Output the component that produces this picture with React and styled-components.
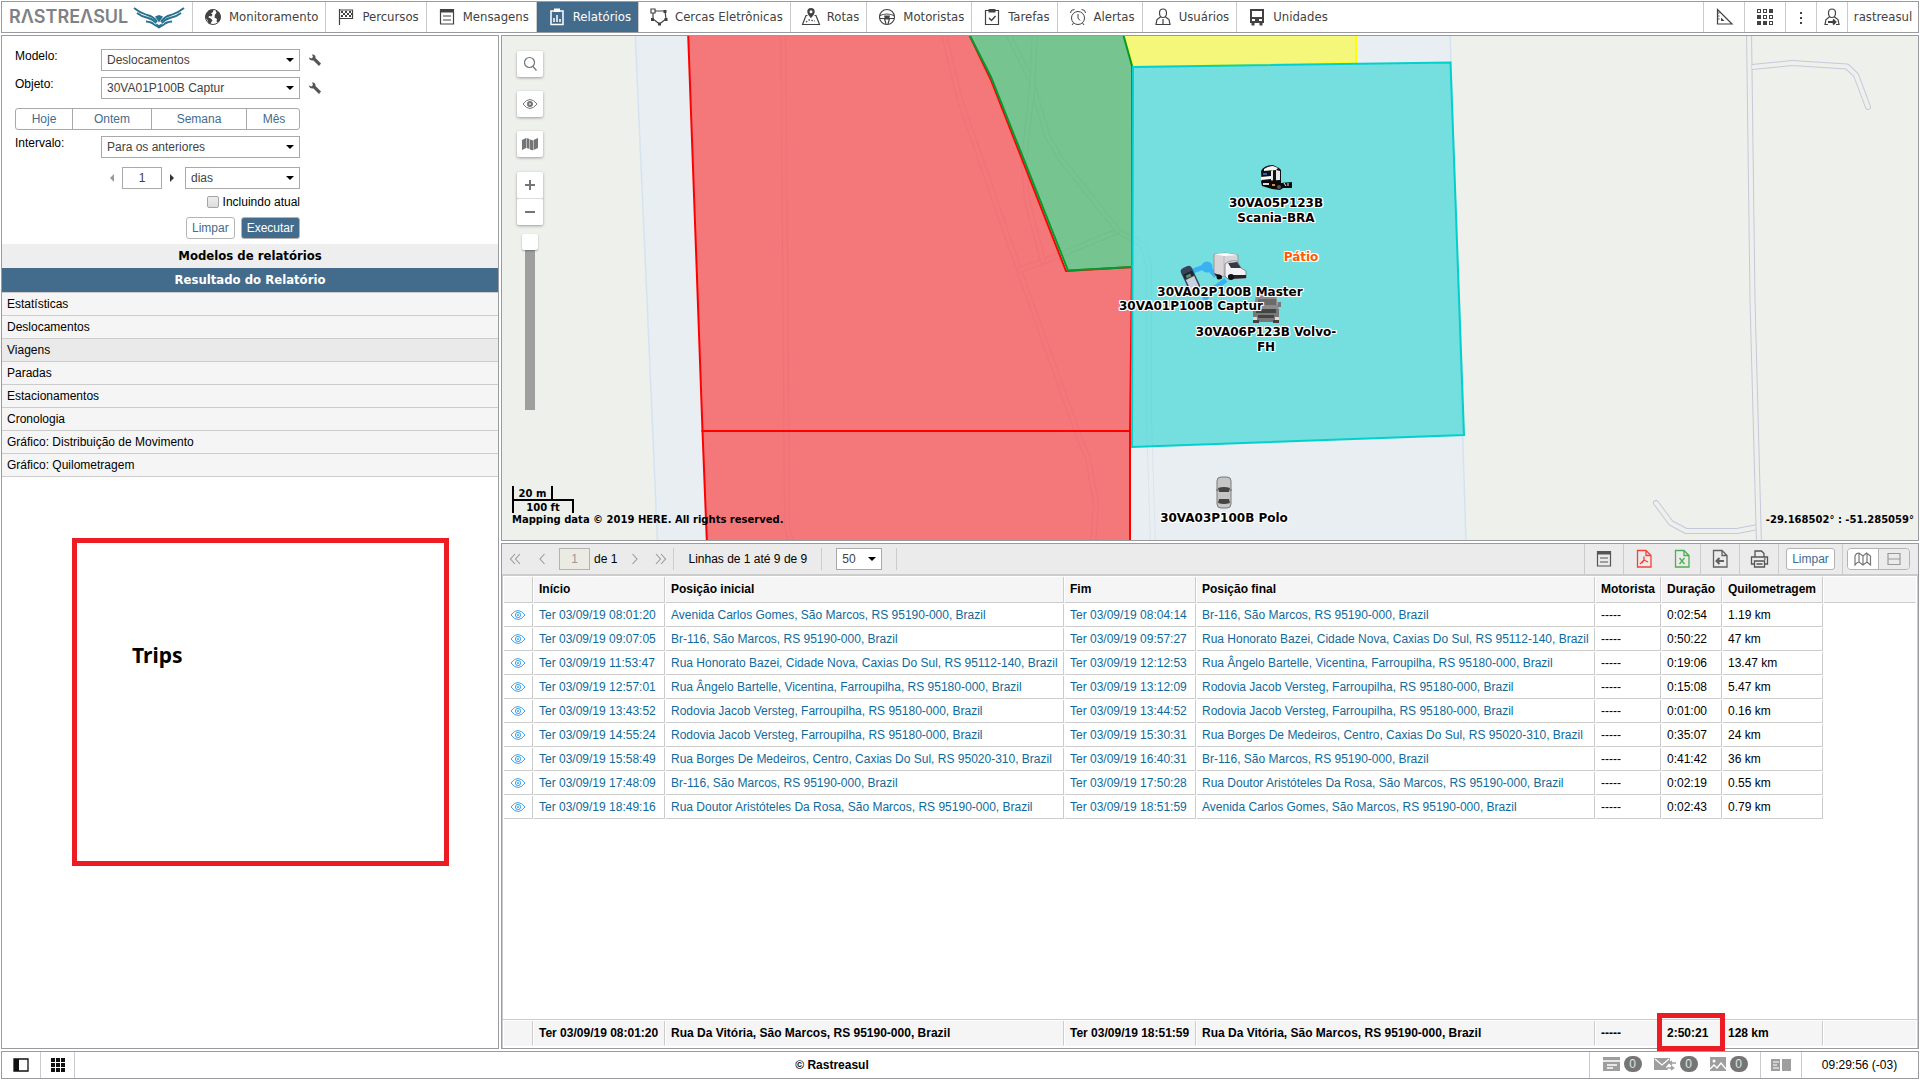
import React from "react";
import styled, { createGlobalStyle, css } from "styled-components";

const SANS = '"Liberation Sans", Arial, sans-serif';
const TAHOMA = '"DejaVu Sans Condensed", "DejaVu Sans", sans-serif';
const VERDANA = '"DejaVu Sans", Verdana, sans-serif';
const BLUE = "#436b8c";
const LINE = "#cccccc";
const FRAME = "#9a9aa0";

const GlobalStyle = createGlobalStyle`
  *, *::before, *::after { box-sizing: border-box; }
  body { margin: 0; background: #fff; color: #000; font: 12px/16px ${SANS}; }
  button, input, select { font: inherit; color: inherit; margin: 0; }
  button { cursor: pointer; }
  a { color: inherit; text-decoration: none; }
  svg { display: block; flex: none; }
`;

/* ---------- frame ---------- */
const Page = styled.div`
  height: 100vh;
  padding: 1px;
  display: grid;
  grid-template-rows: 32px minmax(0, 1fr) 28px;
  gap: 2px;
`;
const Framed = css`
  border: 1px solid ${FRAME};
  background: #fff;
`;
const TopBar = styled.header`
  ${Framed}
  display: flex;
  font: 13px/16px ${TAHOMA};
  color: #424242;
`;
const Workspace = styled.main`
  display: grid;
  grid-template-columns: 498px minmax(0, 1fr);
  gap: 2px;
  min-height: 0;
`;
const RightSide = styled.div`
  display: grid;
  grid-template-rows: minmax(0, 1fr) minmax(0, 1fr);
  gap: 2px;
  min-height: 0;
`;

/* ---------- top bar ---------- */
const Logo = styled.a`
  display: flex;
  align-items: center;
  width: 191px;
  padding-left: 7px;
  border-right: 1px solid ${LINE};
`;
const LogoText = styled.span`
  font: 600 18px/20px Inter, sans-serif;
  color: #808184;
  width: 124px;
  white-space: nowrap;
`;
const Nav = styled.nav`
  display: flex;
  flex: 1;
`;
const NavItem = styled.a`
  display: flex;
  align-items: center;
  gap: 6px;
  padding: 0 7px 0 10px;
  border-right: 1px solid ${(p) => (p.$last ? "transparent" : LINE)};
  ${(p) => p.$active && css`background: ${BLUE}; color: #fff;`}
`;
const BarButton = styled.button`
  display: flex;
  align-items: center;
  justify-content: center;
  width: ${(p) => p.$w}px;
  padding: 0;
  background: none;
  border: 0;
  border-left: 1px solid ${LINE};
`;

/* ---------- left panel ---------- */
const SidePanel = styled.aside`
  ${Framed}
  min-height: 0;
  overflow: hidden;
`;
const Form = styled.form`
  display: flex;
  flex-direction: column;
  gap: 6px;
  padding: 13px 0 5px 13px;
`;
const FormRow = styled.div`
  display: flex;
  height: 22px;
  label { width: 86px; line-height: 14px; }
`;
const SelectWrap = styled.span`
  position: relative;
  display: flex;
  width: ${(p) => p.$w}px;
  height: 22px;
  &::after {
    content: "";
    position: absolute;
    right: 6px;
    top: 9px;
    border: 4px solid transparent;
    border-top-color: #000;
    border-bottom: 0;
    pointer-events: none;
  }
  select {
    appearance: none;
    width: 100%;
    padding: 0 5px;
    border: 1px solid #a9a9a9;
    border-radius: 0;
    background: #fff;
    color: #424242;
  }
`;
const IconButton = styled.button`
  display: flex;
  align-items: center;
  justify-content: center;
  width: ${(p) => p.$w || 20}px;
  padding: 0;
  border: 0;
  background: none;
  color: ${(p) => p.$color || "#555"};
`;
const Segments = styled.div`
  display: grid;
  grid-template-columns: 56px 79px 95px 55px;
  width: 285px;
  height: 22px;
  margin: 3px 0 0;
  border: 1px solid #a9a9a9;
  border-radius: 3px;
  button {
    padding: 0;
    border: 0;
    border-left: 1px solid #a9a9a9;
    background: none;
    color: ${BLUE};
  }
  button:first-child { border-left: 0; }
`;
const Stepper = styled.div`
  display: flex;
  justify-content: flex-end;
  align-items: center;
  width: 285px;
  height: 22px;
  margin-top: 3px;
  > input {
    width: 40px;
    height: 22px;
    padding: 0;
    border: 1px solid #a9a9a9;
    text-align: center;
    color: #424242;
  }
`;
const StepButton = styled(IconButton)`
  width: 23px;
  padding: ${(p) => (p.$off ? "0 0 0 2px" : "0 4px 0 0")};
  color: ${(p) => (p.$off ? "#9a9a9a" : "#333")};
`;
const CheckRow = styled.label`
  display: flex;
  justify-content: flex-end;
  align-items: center;
  gap: 4px;
  width: 285px;
  height: 14px;
  margin-bottom: 2px;
  input {
    appearance: none;
    width: 12px;
    height: 12px;
    border: 1px solid #a5a5a5;
    border-radius: 2px;
    background: linear-gradient(#eee, #dcdcdc);
  }
`;
const FormButtons = styled.div`
  display: flex;
  justify-content: flex-end;
  gap: 6px;
  width: 285px;
`;
const PushButton = styled.button`
  height: 22px;
  padding: 0 5px;
  border: 1px solid #b4b4b4;
  border-radius: 3px;
  background: ${(p) => (p.$primary ? BLUE : "#fff")};
  color: ${(p) => (p.$primary ? "#fff" : BLUE)};
`;
const Heading = styled.h2`
  margin: 0;
  height: 24px;
  text-align: center;
  font: bold 13px/24px ${TAHOMA};
  background: ${(p) => (p.$active ? BLUE : "#eeeeee")};
  color: ${(p) => (p.$active ? "#fff" : "#000")};
`;
const ResultList = styled.ul`
  list-style: none;
  margin: 0;
  padding: 0;
  border-top: 1px solid ${LINE};
`;
const ResultItem = styled.li`
  height: 23px;
  padding-left: 5px;
  line-height: 23px;
  border-bottom: 1px solid ${LINE};
  background: ${(p) => (p.$active ? "#eaeaea" : "#f5f5f5")};
`;
const Note = styled.div`
  margin: 61px 49px 0 70px;
  height: 328px;
  padding: 98px 55px;
  border: 5px solid #ed1c24;
  font: bold 21px/28px "Noto Sans", sans-serif;
`;

/* ---------- map ---------- */
const MapPanel = styled.section`
  ${Framed}
  position: relative;
  overflow: hidden;
  font: bold 12px/15px ${VERDANA};
`;
const MapCanvas = styled.svg`
  width: 100%;
  height: 100%;
`;
const MapLabel = styled.div`
  position: absolute;
  left: ${(p) => p.$x}px;
  top: ${(p) => p.$y}px;
  transform: translateX(-50%);
  text-align: center;
  white-space: pre;
  color: ${(p) => p.$color || "#000"};
  text-shadow: 1px 0 #fff, -1px 0 #fff, 0 1px #fff, 0 -1px #fff, 1px 1px #fff, -1px -1px #fff, 1px -1px #fff, -1px 1px #fff;
`;
const Controls = styled.div`
  position: absolute;
  left: 15px;
  top: 15px;
  display: flex;
  flex-direction: column;
  align-items: center;
  gap: 14px;
`;
const MapButton = styled.button`
  display: flex;
  align-items: center;
  justify-content: center;
  width: 26px;
  height: 26px;
  padding: 0;
  border: 0;
  border-radius: 2px;
  background: #fff;
  color: #757575;
  box-shadow: 0 1px 3px rgba(0, 0, 0, 0.35);
`;
const ZoomPair = styled.div`
  display: grid;
  gap: 1px;
  margin-top: 1px;
  background: #ddd;
  border-radius: 2px;
  box-shadow: 0 1px 3px rgba(0, 0, 0, 0.35);
  ${MapButton} { box-shadow: none; }
`;
const ZoomSlider = styled.input`
  appearance: none;
  writing-mode: vertical-lr;
  width: 16px;
  height: 176px;
  margin: -5px 0 0;
  background: linear-gradient(90deg, transparent 3px, #9e9e9c 3px, #9e9e9c 13px, transparent 13px);
  &::-webkit-slider-thumb {
    appearance: none;
    width: 16px;
    height: 16px;
    border-radius: 2px;
    background: #fff;
    box-shadow: 0 1px 2px rgba(0, 0, 0, 0.3);
  }
`;
const MapInfo = styled.div`
  position: absolute;
  left: 10px;
  bottom: 13px;
  font: bold 10px/14px ${VERDANA};
`;
const ScaleTop = styled.div`
  width: 41px;
  height: 13px;
  border: solid #000;
  border-width: 0 2px;
  text-align: center;
  line-height: 16px;
`;
const ScaleBottom = styled.div`
  width: 62px;
  height: 14px;
  border: 2px solid #000;
  border-bottom: 0;
  text-align: center;
`;
const Coordinates = styled(MapInfo)`
  left: auto;
  right: 4px;
`;

/* ---------- report ---------- */
const Report = styled.section`
  ${Framed}
  display: flex;
  flex-direction: column;
  min-height: 0;
`;
const ToolBar = styled.div`
  display: flex;
  align-items: center;
  height: 32px;
  border-bottom: 2px solid ${LINE};
  background: #ebebeb;
`;
const Cell = styled.div`
  display: flex;
  align-items: center;
  justify-content: center;
  align-self: center;
  height: ${(p) => (p.$tall ? 30 : 22)}px;
  width: ${(p) => p.$w}px;
  border-right: ${(p) => (p.$plain ? "0" : `1px solid ${LINE}`)};
`;
const PageLabel = styled.label`
  display: flex;
  align-items: center;
  gap: 4px;
  margin: 0 4px;
  input {
    width: 31px;
    height: 22px;
    padding: 0;
    border: 1px solid #b4b4b4;
    background: #ebebe4;
    color: #999;
    text-align: center;
  }
`;
const PagerButton = styled(IconButton)`
  width: ${(p) => p.$w}px;
  color: #999;
`;
const Fill = styled.div`
  flex: 1;
  align-self: stretch;
  border-right: 1px solid ${LINE};
`;
const ViewToggle = styled.div`
  display: grid;
  grid-template-columns: 30px 31px;
  height: 22px;
  margin-right: 4px;
  border: 1px solid #b4b4b4;
  border-radius: 4px;
  overflow: hidden;
  button {
    display: flex;
    align-items: center;
    justify-content: center;
    padding: 0;
    border: 0;
    color: #777;
    background: #fff;
  }
  button + button { border-left: 1px solid #b4b4b4; background: #ebebeb; color: #999; }
`;
const TableArea = styled.div`
  flex: 1;
  min-height: 0;
  display: flex;
  flex-direction: column;
  justify-content: space-between;
  border: solid ${LINE};
  border-width: 0 1px;
`;
const Table = styled.table`
  width: 100%;
  table-layout: fixed;
  border-spacing: 1px;
  th, td {
    height: 23px;
    padding: 0 5px;
    border-right: 1px solid ${LINE};
    border-bottom: 1px solid ${LINE};
    text-align: left;
    white-space: nowrap;
  }
  th { height: 25px; background: #f5f5f5; border-bottom-color: #f5f5f5; }
  thead th { height: 26px; padding-bottom: 1px; border-bottom-color: ${LINE}; }
  td:last-child { border-color: transparent; }
  th:last-child { border-right-color: transparent; }
  td svg { margin: 0 auto; }
`;
const Totals = styled.div`
  border-top: 1px solid ${LINE};
  padding-bottom: 1px;
`;
const PlaceLink = styled.a`
  color: #0f6a9b;
`;
const Marked = styled.th`
  position: relative;
  &::after {
    content: "";
    position: absolute;
    left: -5px;
    top: -8px;
    width: 68px;
    height: 38px;
    border: 5px solid #ed1c24;
    z-index: 1;
  }
`;

/* ---------- status bar ---------- */
const StatusBar = styled.footer`
  ${Framed}
  display: flex;
`;
const StatusCell = styled.div`
  display: flex;
  align-items: center;
  justify-content: center;
  gap: 12px;
  width: ${(p) => p.$w}px;
  flex: ${(p) => (p.$w ? "none" : 1)};
  font-weight: ${(p) => (p.$bold ? "bold" : "normal")};
  border-right: 1px solid ${(p) => (p.$last ? "transparent" : LINE)};
`;
const StatusGroup = styled.span`
  display: flex;
  align-items: center;
  gap: 4px;
  margin-bottom: 2px;
`;
const Badge = styled.span`
  width: 18px;
  height: 16px;
  border-radius: 8px;
  background: #757575;
  color: #e4e4e4;
  text-align: center;
  line-height: 16px;
`;

/* ---------- icons ---------- */
const Svg = ({ s = 20, w = s, h = s, children, sw = 1.2 }) => (
  <svg width={w} height={h} viewBox={`0 0 ${w} ${h}`} fill="none" stroke="currentColor" strokeWidth={sw} aria-hidden="true">
    {children}
  </svg>
);
const F = { fill: "currentColor", stroke: "none" };

const Globe = () => (
  <Svg sw={1}><circle cx="10" cy="10" r="7.5" />
    <path {...F} d="M3 7l3-4 4.500-.5-.5 2.500-2 1.500 1.500 1-1 2-2.500-.5-.5 1.500 2.500 1 1.500 2-1.500 2-.5 1.800-2-.8-1-3.500-2-2zM12.500 3.500l3.500 1.500 1.500 4-.5 4-2 2.500-1.500-1 .5-2.500-2.500-1.500.5-3 1.500-1.500z" /></Svg>
);
const Flag = () => (
  <Svg><path d="M3.500 2v16M3.500 3h13v8.500h-13" />
    <path {...F} d="M5 4h2v2H5zM9 4h2v2H9zM13 4h2v2h-2zM7 6h2v2H7zM11 6h2v2h-2zM5 8h2v2H5zM9 8h2v2H9zM13 8h2v2h-2zM15 6h1v2h-1z" /></Svg>
);
const Doc = ({ s = 20 }) => (
  <Svg s={s}><path d="M3.500 2.500h13v14.500h-13z" /><path {...F} d="M3 2h14v3.500H3z" /><path d="M6 9h8M6 13h8" /></Svg>
);
const ReportIcon = () => (
  <Svg sw={1.5}><path d="M4 4h12v13.500H4z" /><path {...F} d="M7 1.500h6V5H7z" /><path d="M7 15v-4M10 15V8M13 15v-3" /></Svg>
);
const Fence = () => (
  <Svg><path d="M4 4h12l1 8-6.500 5L4 12z" /><path fill="#fff" d="M2 2h4v4H2z" /><path {...F} d="M14.500 3h3v3h-3zM15.500 11h3v3h-3zM9 15.500h3v3H9zM2 11h3v3H2z" /></Svg>
);
const Route = () => (
  <Svg><path d="M6.500 8.500H5L1.500 17.500h17L15 8.500h-1.500" /><path {...F} fillRule="evenodd" d="M10 1a3.700 3.700 0 0 1 3.700 3.700C13.700 7.500 10 11 10 11S6.300 7.500 6.300 4.700A3.700 3.700 0 0 1 10 1zm0 2.200a1.500 1.500 0 1 0 0 3 1.500 1.500 0 0 0 0-3z" /><path strokeDasharray="1.500 1.500" d="M5 15l3-2 6 1" /></Svg>
);
const Wheel = () => (
  <Svg><circle cx="10" cy="10" r="7.500" /><path d="M3 8.500q7-3 14 0M3 11.500h4.500l1.500 5.500M17 11.500h-4.500L11 17" /><path {...F} d="M7 8.500h6l-1 4H8z" /></Svg>
);
const Task = () => (
  <Svg><path d="M3.500 3.500h13v14h-13z" /><path {...F} d="M6.500 2h7v3.500h-7z" /><path strokeWidth="1.500" d="M7 11l2.500 2.500L13.500 9" /></Svg>
);
const Alarm = () => (
  <Svg sw={1}><circle cx="10" cy="11" r="6.500" /><path d="M10 7v4l2 2.500M2.500 6q0-3.500 4-3.500M17.500 6q0-3.500-4-3.500M5.500 16L4 18M14.500 16l1.500 2" /></Svg>
);
const User = ({ arrow }) => (
  <Svg><path d="M10 2c-2.500 0-3.500 1.700-3.500 4s1.300 4.500 3.500 4.500 3.500-2.200 3.500-4.500-1-4-3.500-4z" /><path d="M7.500 10L4 12.500 3 17.500h3M12.500 10l3.500 2.500 1 5h-3" />{arrow ? <path strokeWidth="1.800" d="M6 15h7M11 12.500l2.500 2.500-2.500 2.500" /> : <path d="M6 17.500h8M10 12v5" />}</Svg>
);
const Bus = () => (
  <Svg><path {...F} fillRule="evenodd" d="M3 2h14v14h-1.500v2.500h-3V16h-5v2.500h-3V16H3zm2 2v6h10V4zm0 8v2h3v-2zm7 0v2h3v-2z" /></Svg>
);
const Ruler = () => <Svg><path d="M3.500 2.500v14.500h14.500z" /><path {...F} d="M7 10.500v3.500h3.500z" /><path d="M3.500 6h2M3.500 9h2M3.500 12h2" /></Svg>;
/* filled cells of the 3x3 application grid */
const TILE_FILL = [2, 3, 6, 7];
const Tiles = () => (
  <Svg sw={1}>{[0, 1, 2].flatMap((r) => [0, 1, 2].map((c) => (
    <rect key={`${r}${c}`} x={2.5 + c * 6} y={2.5 + r * 6} width="3" height="3" fill={TILE_FILL.includes(r * 3 + c) ? "currentColor" : "none"} />
  )))}</Svg>
);
const Dots = () => <Svg><path {...F} d="M9 5h2v2H9zM9 10h2v2H9zM9 15h2v2H9z" /></Svg>;
const Wrench = () => <Svg s={14}><path {...F} d="M1 4.500l2.500 1L5 4 4 1.500C6 1 8 2.500 7.500 5L13 10.500 11 13 5.500 7.500C3 8 1 6.500 1 4.500z" /></Svg>;
const Triangle = ({ left }) => <Svg s={8}><path {...F} d={left ? "M6 0v8L2 4z" : "M2 0v8l4-4z"} /></Svg>;
const Chevrons = ({ d, w = 10 }) => <Svg w={w} h={12} sw={1.1}><path d={d} /></Svg>;
const Eye = ({ w = 16, dark }) => (
  <Svg w={w} h={12} sw={1}><g stroke={dark ? "#777" : "#42a0e8"}><path d="M1 6q7-9 14 0q-7 9-14 0z" /><circle cx="8" cy="6" r="2.600" fill={dark ? "#777" : "none"} /></g><circle cx="8" cy="6" r="1" fill={dark ? "#ddd" : "#42a0e8"} stroke="none" /></Svg>
);
const FileIcon = ({ color, children }) => <Svg><g stroke={color || "#616161"} strokeWidth="1.300"><path d="M3.500 1.500h8.500l5 5v11.500H3.500zM12 1.500v5h5" />{children}</g></Svg>;
const Printer = () => <Svg sw={1.3}><path d="M6 8V2h6.500L15 4.500V8M5.500 15H2.500V8h16v7h-3M5.500 12h10v6h-10zM7.500 15h6M15 10h1.500" /></Svg>;
const MapFold = ({ solid }) => (
  solid
    ? <Svg w={18} h={14}><path {...F} d="M1 3l4-2v10l-4 2zM5.500 1l3 1v10l-3-1zM9 2.500l3 1v10l-3-1zM12.500 3L17 1v10l-4.500 2z" /></Svg>
    : <Svg w={18} h={14}><path d="M1 13V4q1-3 4-3l4 3 3.500-3 4 3v9l-3.500-3-4 3-4-3q-2 0-4 3zM5 1v9M9 4v9M13 1v9" /></Svg>
);
const Wings = () => (
  <svg width="52" height="26" viewBox="0 0 52 26" aria-hidden="true">
    <g fill="none" stroke="#26728f" strokeWidth="1.800" strokeLinejoin="round">
      <path d="M1 4q6 5 13 7 7 1.500 10 7M51 4q-6 5-13 7-7 1.500-10 7" />
      <path d="M4 9q5 4 11 5 5 1 8 5M48 9q-5 4-11 5-5 1-8 5" />
      <path d="M13 17.500q6 .5 8 3l5 3 5-3q2-2.500 8-3" />
    </g>
    <path fill="#26728f" d="M22 12.500l4-1.500 4 1.500-4 6zM22 19l4 2 4-2-4 5.500z" />
  </svg>
);

const NAV = [
  ["Monitoramento", Globe], ["Percursos", Flag], ["Mensagens", Doc], ["Relatórios", ReportIcon],
  ["Cercas Eletrônicas", Fence], ["Rotas", Route], ["Motoristas", Wheel], ["Tarefas", Task],
  ["Alertas", Alarm], ["Usuários", User], ["Unidades", Bus],
];
const RESULTS = ["Estatísticas", "Deslocamentos", "Viagens", "Paradas", "Estacionamentos", "Cronologia", "Gráfico: Distribuição de Movimento", "Gráfico: Quilometragem"];

const AV = "Avenida Carlos Gomes, São Marcos, RS 95190-000, Brazil";
const BR = "Br-116, São Marcos, RS 95190-000, Brazil";
const HB = "Rua Honorato Bazei, Cidade Nova, Caxias Do Sul, RS 95112-140, Brazil";
const AB = "Rua Ângelo Bartelle, Vicentina, Farroupilha, RS 95180-000, Brazil";
const JV = "Rodovia Jacob Versteg, Farroupilha, RS 95180-000, Brazil";
const BM = "Rua Borges De Medeiros, Centro, Caxias Do Sul, RS 95020-310, Brazil";
const DA = "Rua Doutor Aristóteles Da Rosa, São Marcos, RS 95190-000, Brazil";
const RV = "Rua Da Vitória, São Marcos, RS 95190-000, Brazil";
const TRIPS = [
  ["08:01:20", AV, "08:04:14", BR, "0:02:54", "1.19 km"],
  ["09:07:05", BR, "09:57:27", HB, "0:50:22", "47 km"],
  ["11:53:47", HB, "12:12:53", AB, "0:19:06", "13.47 km"],
  ["12:57:01", AB, "13:12:09", JV, "0:15:08", "5.47 km"],
  ["13:43:52", JV, "13:44:52", JV, "0:01:00", "0.16 km"],
  ["14:55:24", JV, "15:30:31", BM, "0:35:07", "24 km"],
  ["15:58:49", BM, "16:40:31", BR, "0:41:42", "36 km"],
  ["17:48:09", BR, "17:50:28", DA, "0:02:19", "0.55 km"],
  ["18:49:16", DA, "18:51:59", AV, "0:02:43", "0.79 km"],
];
const COLS = [29, 131, 398, 131, 398, 65, 60, 100];
const Columns = () => (
  <colgroup>{COLS.map((w, i) => <col key={i} style={{ width: w }} />)}<col /></colgroup>
);

const Select = ({ w, id, label, children }) => (
  <SelectWrap $w={w}><select id={id} aria-label={label}><option>{children}</option></select></SelectWrap>
);

const Road = ({ pts, land = "#e8eef2", edge = "#dde3ed", w = 6 }) => (
  <g fill="none" strokeLinejoin="round" strokeLinecap="round">
    <polyline points={pts} stroke={edge} strokeWidth={w} />
    <polyline points={pts} stroke={land} strokeWidth={w - 2} />
  </g>
);

function MapDrawing() {
  const side = { land: "#eef0ec", edge: "#c6c7dc" };
  return (
    <MapCanvas viewBox="502 36 1416 504" preserveAspectRatio="xMinYMin slice" aria-hidden="true">
      <rect x="502" y="36" width="1416" height="504" fill="#eef0ec" />
      <path d="M635 30L647 300 657.500 542H1466L1450 30z" fill="#e8eef2" stroke="#d5e3f1" strokeWidth="1.500" />
      <Road pts="783,30 785.500,300 787,527 792,545" />
      <Road pts="943,30 960,100 1019,270 1079,437 1088,458 1096,503 1093,545" />
      <Road pts="1019,270 1045,261 1118,231 1143,245 1149,267 1149,420 1153,545" />
      <Road pts="1006,30 1031,80 1047,135 1060,158 1118,231" />
      <Road pts="1035,30 1032,90 1024,160 1027,200 1043,261" />
      <Road {...side} pts="1752,67 1792,63 1847,66.500 1856,75 1868,107" />
      <Road {...side} pts="1656,503 1671,523 1686,531 1737,531 1758,527" />
      <Road {...side} pts="1749,30 1752.500,300 1759,545" />
      <path d="M1752 67h4" stroke="#eef0ec" strokeWidth="3" />
      <g strokeWidth="2">
        <g fill="rgba(255,0,0,.5)" stroke="#f00">
          <path d="M688 30L696 250 702.500 431H1130L1132 267 1066 271 991 80 967 30z" />
          <path d="M702.500 431L707 545H1130V431z" />
        </g>
        <path d="M1122 30L1133 67 1356 63V30z" fill="rgba(255,255,0,.5)" stroke="#ff0" />
        <path d="M967 30L991 77 1068 270.500 1132 267V66L1122 30z" fill="rgba(4,154,46,.5)" stroke="#049a2e" />
        <path d="M1133 67L1450.500 62.500 1464 435 1132 447z" fill="rgba(2,208,204,.5)" stroke="#02d0cc" />
      </g>
      {/* track between the parked vehicles */}
      <g stroke="#38b2f2" fill="#38b2f2" strokeWidth="5">
        <path fill="none" d="M1190 272L1207 266 1216 276M1226 280L1212 290 1204 300" />
        <circle cx="1207" cy="267" r="3" />
      </g>
      {/* box truck */}
      <g>
        <path d="M1214 254l12-1 12 2v22h-12l-12-3z" fill="#d9d4d8" stroke="#8d8a92" strokeWidth=".8" />
        <path d="M1214 254l12-1 12 2-14 1z" fill="#fff" />
        <path d="M1224 256v20" stroke="#b9b6bf" />
        <path d="M1225 264q4-4 12-3l4 7 5 3v7l-18 1-3-3z" fill="#f2f2f6" stroke="#77757d" strokeWidth=".8" />
        <path d="M1228 263l9-1 4 6-10 0z" fill="#333844" />
        <path d="M1228 275h18v3l-16 1zM1214 273l8 3v3l-6-3z" fill="#23232a" />
        <circle cx="1231" cy="277" r="3" fill="#111" /><circle cx="1219" cy="277" r="2.500" fill="#111" />
      </g>
      {/* car seen at an angle */}
      <g transform="rotate(-25 1190 278)">
        <rect x="1184" y="266" width="12" height="26" rx="4" fill="#39435c" />
        <path d="M1185 272h10v5h-10z" fill="#1c2534" /><path d="M1185.500 278h9v11h-9z" fill="#c9d0de" />
        <path d="M1187 274h5v3h-5z" fill="#5a8f62" />
      </g>
      {/* tractor unit */}
      <g>
        <path d="M1261 171q3-6 12-6l6 3 2 2v16h-19z" fill="#111" />
        <path d="M1264 169q4-3 9-3l5 2-2 2-12 1z" fill="#f4f5f7" />
        <path d="M1271 171l2-1v11l-2 1zM1276 170l4 1v9l-4 2z" fill="#e8e8ea" />
        <path d="M1263 173h4v2h-4z" fill="#3a5cb0" />
        <path d="M1261 177l10-1v3l-10 1zM1262 182h7v2h-7z" fill="#fff" />
        <path d="M1261 181l20-1v3l11-1v6h-9l-3 2-8-1-10-3z" fill="#0b0b0b" />
        <path d="M1263 183h6v2h-6z" fill="#ddd" /><path d="M1272 184h3v2h-3z" fill="#d98c3a" />
        <circle cx="1279" cy="187" r="2" fill="#555" /><path d="M1284 183l2 3M1288 183v3" stroke="#eee" />
      </g>
      {/* truck front */}
      <g>
        <path d="M1256 295h20l3 16H1253z" fill="#8b8b8b" /><path d="M1258 299h18v6h-18z" fill="#6b6b6b" />
        <path d="M1253 309h26v13h-26z" fill="#787878" /><path d="M1256 309h20v4h-20zM1258 315h16v3h-16z" fill="#444" />
        <path d="M1253 317h4v3h-4zM1275 317h4v3h-4z" fill="#ddd" /><path d="M1253 320h6v3h-6zM1273 320h6v3h-6z" fill="#444" />
        <path d="M1278 302h3v5h-3z" fill="#777" />
      </g>
      {/* parked car from above */}
      <g>
        <rect x="1217" y="477" width="14" height="31" rx="4" fill="#c5c5c5" stroke="#7b7b7b" />
        <path d="M1218 488q6-2 12 0l-1 4h-10z" fill="#444" /><path d="M1218 503q6 2 12 0l-1-4h-10z" fill="#444" />
        <path d="M1216 490h2M1230 490h2" stroke="#666" />
      </g>
    </MapCanvas>
  );
}

export default function App() {
  return (
    <>
      <GlobalStyle />
      <Page>
        <TopBar>
          <Logo href="#" aria-label="Rastreasul">
            <LogoText>RΛSTREΛSUL</LogoText>
            <Wings />
          </Logo>
          <Nav>
            {NAV.map(([name, Icon], i) => (
              <NavItem key={name} href="#" $active={name === "Relatórios"} $last={i === NAV.length - 1}>
                <Icon />{name}
              </NavItem>
            ))}
          </Nav>
          <BarButton $w={41} aria-label="Ferramentas"><Ruler /></BarButton>
          <BarButton $w={41} aria-label="Aplicativos"><Tiles /></BarButton>
          <BarButton $w={31} aria-label="Mais"><Dots /></BarButton>
          <BarButton $w={31} aria-label="Trocar usuário"><User arrow /></BarButton>
          <BarButton $w={71}>rastreasul</BarButton>
        </TopBar>

        <Workspace>
          <SidePanel>
            <Form onSubmit={(e) => e.preventDefault()}>
              <FormRow>
                <label htmlFor="modelo">Modelo:</label>
                <Select w={199} id="modelo">Deslocamentos</Select>
                <IconButton type="button" $w={30} aria-label="Editar modelo"><Wrench /></IconButton>
              </FormRow>
              <FormRow>
                <label htmlFor="objeto">Objeto:</label>
                <Select w={199} id="objeto">30VA01P100B Captur</Select>
                <IconButton type="button" $w={30} aria-label="Editar objeto"><Wrench /></IconButton>
              </FormRow>
              <Segments>
                <button type="button">Hoje</button>
                <button type="button">Ontem</button>
                <button type="button">Semana</button>
                <button type="button">Mês</button>
              </Segments>
              <FormRow>
                <label htmlFor="intervalo">Intervalo:</label>
                <Select w={199} id="intervalo">Para os anteriores</Select>
              </FormRow>
              <Stepper>
                <StepButton type="button" $off aria-label="Diminuir"><Triangle left /></StepButton>
                <input aria-label="Quantidade" defaultValue="1" />
                <StepButton type="button" aria-label="Aumentar"><Triangle /></StepButton>
                <Select w={115} label="Unidade">dias</Select>
              </Stepper>
              <CheckRow><input type="checkbox" />Incluindo atual</CheckRow>
              <FormButtons>
                <PushButton type="button">Limpar</PushButton>
                <PushButton type="submit" $primary>Executar</PushButton>
              </FormButtons>
            </Form>
            <Heading>Modelos de relatórios</Heading>
            <Heading $active>Resultado do Relatório</Heading>
            <ResultList>
              {RESULTS.map((r) => <ResultItem key={r} $active={r === "Viagens"}><a href="#">{r}</a></ResultItem>)}
            </ResultList>
            <Note>Trips</Note>
          </SidePanel>

          <RightSide>
            <MapPanel>
              <MapDrawing />
              <MapLabel $x={689} $y={263}>30VA01P100B Captur</MapLabel>
              <MapLabel $x={728} $y={249}>30VA02P100B Master</MapLabel>
              <MapLabel $x={774} $y={160}>{"30VA05P123B\nScania-BRA"}</MapLabel>
              <MapLabel $x={799} $y={214} $color="#ff5a00">Pátio</MapLabel>
              <MapLabel $x={764} $y={289}>{"30VA06P123B Volvo-\nFH"}</MapLabel>
              <MapLabel $x={722} $y={475}>30VA03P100B Polo</MapLabel>
              <Controls>
                <MapButton aria-label="Buscar"><Svg s={18}><circle cx="8.500" cy="7.500" r="5" /><path d="M12 11.500l3.500 4" /></Svg></MapButton>
                <MapButton aria-label="Visibilidade"><Eye dark /></MapButton>
                <MapButton aria-label="Camadas"><MapFold solid /></MapButton>
                <ZoomPair>
                  <MapButton aria-label="Aproximar"><Svg s={12} sw={2}><path d="M1 6h10M6 1v10" /></Svg></MapButton>
                  <MapButton aria-label="Afastar"><Svg s={12} sw={2}><path d="M1 6h10" /></Svg></MapButton>
                </ZoomPair>
                <ZoomSlider type="range" aria-label="Zoom" min="0" max="20" defaultValue="0" />
              </Controls>
              <MapInfo>
                <ScaleTop>20 m</ScaleTop>
                <ScaleBottom>100 ft</ScaleBottom>
                Mapping data © 2019 HERE. All rights reserved.
              </MapInfo>
              <Coordinates>-29.168502° : -51.285059°</Coordinates>
            </MapPanel>

            <Report>
              <ToolBar>
                <PagerButton $w={26} aria-label="Primeira"><Chevrons w={12} d="M6 1L1.500 6 6 11M11 1L6.500 6 11 11" /></PagerButton>
                <PagerButton $w={27} aria-label="Anterior"><Chevrons w={8} d="M6.500 1L2 6l4.500 5" /></PagerButton>
                <PageLabel><input defaultValue="1" disabled aria-label="Página" />de 1</PageLabel>
                <PagerButton $w={28} aria-label="Próxima"><Chevrons w={8} d="M1.500 1L6 6l-4.500 5" /></PagerButton>
                <PagerButton $w={24} aria-label="Última"><Chevrons w={12} d="M1 1l4.500 5L1 11M6 1l4.500 5L6 11" /></PagerButton>
                <Cell $w={1} />
                <Cell $w={148}>Linhas de 1 até 9 de 9</Cell>
                <Cell $w={75}><Select w={46} label="Linhas por página">50</Select></Cell>
                <Fill />
                <Cell $tall $w={39}><IconButton aria-label="Colunas"><Doc /></IconButton></Cell>
                <Cell $tall $plain $w={39}><IconButton aria-label="PDF"><FileIcon color="#f44336"><path d="M6 15l4-4 4 2M10 7.500V11l-2 3" /></FileIcon></IconButton></Cell>
                <Cell $tall $w={38}><IconButton aria-label="Excel"><FileIcon color="#4caf50"><path d="M7.500 9l5 6M12.500 9l-5 6" /></FileIcon></IconButton></Cell>
                <Cell $tall $w={39}><IconButton aria-label="Exportar"><FileIcon><path strokeWidth="2" d="M6.500 12H14M9.500 9l-3 3 3 3" /></FileIcon></IconButton></Cell>
                <Cell $tall $w={39}><IconButton aria-label="Imprimir"><Printer /></IconButton></Cell>
                <Cell $tall $w={64}><PushButton>Limpar</PushButton></Cell>
                <Cell $tall $plain $w={75}>
                  <ViewToggle>
                    <button aria-label="Mapa"><MapFold /></button>
                    <button aria-label="Dividido"><Svg s={14}><path d="M1 1.500h12v11H1zM1 7h12" /></Svg></button>
                  </ViewToggle>
                </Cell>
              </ToolBar>
              <TableArea>
                <Table>
                  <Columns />
                  <thead>
                    <tr><th /><th>Início</th><th>Posição inicial</th><th>Fim</th><th>Posição final</th><th>Motorista</th><th>Duração</th><th>Quilometragem</th><th /></tr>
                  </thead>
                  <tbody>
                    {TRIPS.map(([start, from, end, to, time, km]) => (
                      <tr key={start}>
                        <td><Eye /></td>
                        <td><PlaceLink href="#">Ter 03/09/19 {start}</PlaceLink></td>
                        <td><PlaceLink href="#">{from}</PlaceLink></td>
                        <td><PlaceLink href="#">Ter 03/09/19 {end}</PlaceLink></td>
                        <td><PlaceLink href="#">{to}</PlaceLink></td>
                        <td>-----</td><td>{time}</td><td>{km}</td><td />
                      </tr>
                    ))}
                  </tbody>
                </Table>
                <Totals>
                  <Table>
                    <Columns />
                    <tbody>
                      <tr><th /><th>Ter 03/09/19 08:01:20</th><th>{RV}</th><th>Ter 03/09/19 18:51:59</th><th>{RV}</th><th>-----</th><Marked>2:50:21</Marked><th>128 km</th><th /></tr>
                    </tbody>
                  </Table>
                </Totals>
              </TableArea>
            </Report>
          </RightSide>
        </Workspace>

        <StatusBar>
          <StatusCell $w={39}><IconButton $color="#111" aria-label="Painel"><Svg s={16} sw={1.3}><path d="M1 2h14v12H1z" /><path {...F} d="M1 2h5v12H1z" /></Svg></IconButton></StatusCell>
          <StatusCell $w={34}><IconButton $color="#111" aria-label="Grade"><Svg s={16}><path {...F} d="M1 1h4v4H1zM6 1h4v4H6zM11 1h4v4h-4zM1 6h4v4H1zM6 6h4v4H6zM11 6h4v4h-4zM1 11h4v4H1zM6 11h4v4H6zM11 11h4v4h-4z" /></Svg></IconButton></StatusCell>
          <StatusCell $bold>© Rastreasul</StatusCell>
          <StatusCell $w={171}>
            <StatusGroup><Svg w={17} h={14}><path d="M0 0h17v14H0z" fill="#9e9e9e" stroke="none" /><path d="M0 4h17M4 8h10M4 11h6" stroke="#fff" strokeWidth="1.400" /></Svg><Badge>0</Badge></StatusGroup>
            <StatusGroup><Svg w={22} h={14}><path d="M0 1h16v4l-4 5 2 3H0z" fill="#9e9e9e" stroke="none" /><path d="M1 2l7 6 7-6" stroke="#fff" /><path d="M22 6h-6M18 4l-2.500 2L18 8M13 11h6M17 9l2.500 2-2.500 2" stroke="#9e9e9e" strokeWidth="1.500" /></Svg><Badge>0</Badge></StatusGroup>
            <StatusGroup><Svg w={16} h={14}><path d="M0 0h16v14H0z" fill="#9e9e9e" stroke="none" /><path d="M0 12l4-4 3 3 4-5 5 6" stroke="#fff" strokeWidth="1.400" /><circle cx="4" cy="4" r="1.500" fill="#fff" stroke="none" /></Svg><Badge>0</Badge></StatusGroup>
          </StatusCell>
          <StatusCell $w={41}><Svg w={20} h={12}><path d="M0 0h9v12H0zM11 0h9v12h-9z" fill="#9e9e9e" stroke="none" /><path d="M2 3h6M2 6h4M2 9h6" stroke="#fff" /></Svg></StatusCell>
          <StatusCell $w={116} $last>09:29:56 (-03)</StatusCell>
        </StatusBar>
      </Page>
    </>
  );
}
